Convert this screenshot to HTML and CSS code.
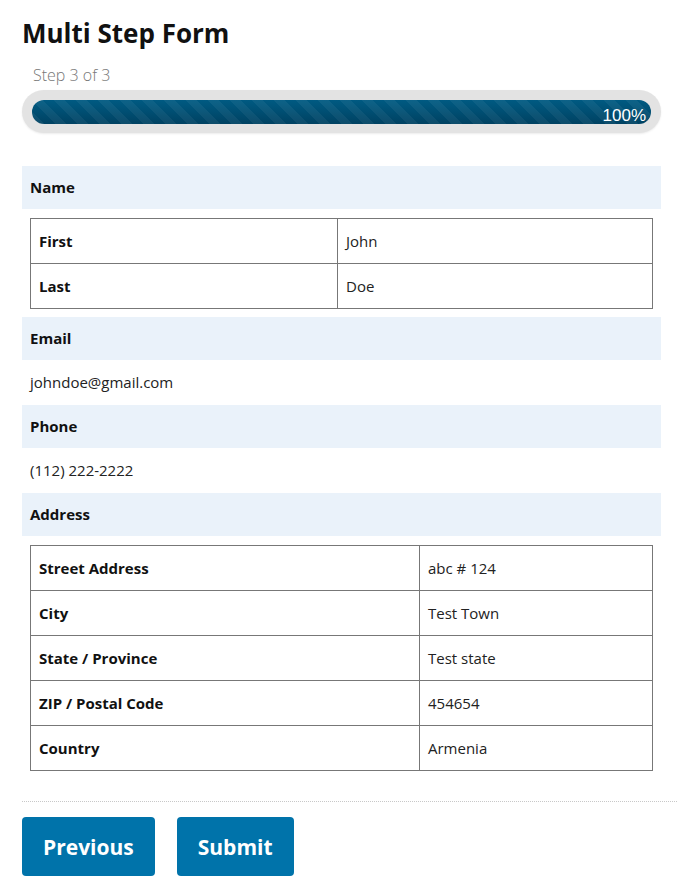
FILE: index.html
```html
<!DOCTYPE html>
<html lang="en">
<head>
    <meta charset="UTF-8">
    <title>Multi Step Form</title>
    <link rel="stylesheet" href="styles.css">
</head>
<body>
<div class="wrap">
    <h1>Multi Step Form</h1>

    <div class="step-title">Step 3 of 3</div>
    <div class="progress">
        <div class="progress-bar" style="width: 100%">100%</div>
    </div>

    <div class="entry">
        <div class="entry-label">Name</div>
        <div class="entry-value">
            <table class="grid grid-name">
                <tr><th>First</th><td>John</td></tr>
                <tr><th>Last</th><td>Doe</td></tr>
            </table>
        </div>

        <div class="entry-label">Email</div>
        <div class="entry-value text">johndoe@gmail.com</div>

        <div class="entry-label">Phone</div>
        <div class="entry-value text">(112) 222-2222</div>

        <div class="entry-label">Address</div>
        <div class="entry-value">
            <table class="grid grid-address">
                <tr><th>Street Address</th><td>abc # 124</td></tr>
                <tr><th>City</th><td>Test Town</td></tr>
                <tr><th>State / Province</th><td>Test state</td></tr>
                <tr><th>ZIP / Postal Code</th><td>454654</td></tr>
                <tr><th>Country</th><td>Armenia</td></tr>
            </table>
        </div>
    </div>

    <div class="footer">
        <button class="btn">Previous</button>
        <button class="btn">Submit</button>
    </div>
</div>
</body>
</html>
```

FILE: styles.css
```css
body {
    margin: 0;
    background: #fff;
    font-family: "Open Sans", "Noto Sans", sans-serif;
    color: #111;
}

.wrap {
    padding: 14px 26px 0 22px;
}

h1 {
    margin: 0 0 10px;
    font-size: 26px;
    font-weight: 700;
    line-height: 38px;
    width: 639px;
}

.step-title {
    padding-left: 11px;
    font-size: 16px;
    font-weight: 300;
    color: #777;
    line-height: 26px;
    margin-bottom: 2px;
}

/* progress bar */
.progress {
    width: 639px;
    box-sizing: border-box;
    padding: 10px 10px 9px;
    background: #e3e3e3;
    border-radius: 22px;
    box-shadow: 0 1px 2px rgba(0,0,0,0.08);
}

.progress-bar {
    height: 24px;
    border-radius: 12px;
    box-sizing: border-box;
    padding-right: 5px;
    text-align: right;
    color: #fff;
    font-family: "Liberation Sans", Arial, sans-serif;
    font-size: 17px;
    line-height: 32px;
    overflow: hidden;
    background-color: #005580;
    background-image:
        linear-gradient(45deg, rgba(255,255,255,0.05) 25%, transparent 25%, transparent 50%, rgba(255,255,255,0.05) 50%, rgba(255,255,255,0.05) 75%, transparent 75%, transparent),
        linear-gradient(to bottom, #005a82, #004262);
    background-size: 22px 22px, 100% 100%;
}

/* entries */
.entry {
    width: 639px;
    margin-top: 33px;
    font-size: 15px;
}

.entry-label {
    background: #eaf2fa;
    font-weight: 700;
    padding: 0 8px;
    line-height: 43px;
}

.entry-value {
    padding: 9px 8px 8px;
}

.entry-value.text {
    padding: 0 8px;
    line-height: 45px;
    color: #222;
}

.grid {
    width: 100%;
    border-collapse: collapse;
}

.grid th,
.grid td {
    border: 1px solid #777;
    padding: 0 8px;
    height: 44px;
    text-align: left;
}

.grid th {
    font-weight: 700;
    color: #111;
}

.grid td {
    color: #222;
}

.grid-name th { width: 290px; }
.grid-address th { width: 372px; }

/* buttons */
.footer {
    border-top: 1px dotted #c8c8c8;
    margin-top: 22px;
    margin-right: -16px;
    padding-top: 15px;
    display: flex;
    gap: 22px;
}

.btn {
    background: #0073aa;
    color: #fff;
    border: none;
    border-radius: 4px;
    height: 59px;
    padding: 0 21px;
    font-family: inherit;
    font-size: 21px;
    font-weight: 700;
    cursor: pointer;
}
```
